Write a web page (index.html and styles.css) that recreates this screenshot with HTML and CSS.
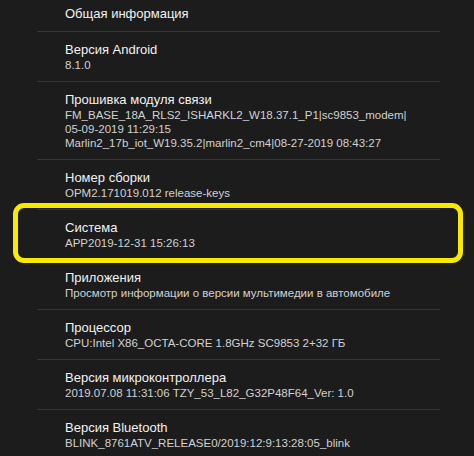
FILE: index.html
```html
<!DOCTYPE html>
<html lang="ru">
<head>
<meta charset="UTF-8" />
<meta name="viewport" content="width=device-width, initial-scale=1" />
<title>Об устройстве</title>
<link rel="stylesheet" href="styles.css">
</head>
<body>
  <ul class="info-list">
    <li class="info-item first">
      <div class="info-title">Общая информация</div>
    </li>
    <li class="info-item">
      <div class="info-title">Версия Android</div>
      <div class="info-value">8.1.0</div>
    </li>
    <li class="info-item">
      <div class="info-title">Прошивка модуля связи</div>
      <div class="info-value">FM_BASE_18A_RLS2_ISHARKL2_W18.37.1_P1|sc9853_modem|</div>
      <div class="info-value">05-09-2019 11:29:15</div>
      <div class="info-value">Marlin2_17b_iot_W19.35.2|marlin2_cm4|08-27-2019 08:43:27</div>
    </li>
    <li class="info-item">
      <div class="info-title">Номер сборки</div>
      <div class="info-value">OPM2.171019.012 release-keys</div>
    </li>
    <li class="info-item highlighted">
      <div class="info-title">Система</div>
      <div class="info-value">APP2019-12-31 15:26:13</div>
    </li>
    <li class="info-item">
      <div class="info-title">Приложения</div>
      <div class="info-value">Просмотр информации о версии мультимедии в автомобиле</div>
    </li>
    <li class="info-item">
      <div class="info-title">Процессор</div>
      <div class="info-value">CPU:Intel X86_OCTA-CORE 1.8GHz SC9853 2+32 ГБ</div>
    </li>
    <li class="info-item">
      <div class="info-title">Версия микроконтроллера</div>
      <div class="info-value">2019.07.08 11:31:06 TZY_53_L82_G32P48F64_Ver: 1.0</div>
    </li>
    <li class="info-item">
      <div class="info-title">Версия Bluetooth</div>
      <div class="info-value">BLINK_8761ATV_RELEASE0/2019:12:9:13:28:05_blink</div>
    </li>
  </ul>
</body>
</html>
```
FILE: styles.css
```css
:root {
  --bg-color: #1c1c1c;
  --title-color: #f2f2f2;
  --value-color: #d2d2d2;
  --divider-color: #363636;
  --marker-color: #f7ea00;
  --font-family: 'Liberation Sans', Arial, Helvetica, sans-serif;
}
* {
  box-sizing: border-box;
}
html, body {
  margin: 0;
  padding: 0;
  background-color: var(--bg-color);
  font-family: var(--font-family);
  overflow: hidden;
}
.info-list {
  list-style: none;
  margin: 0 34px 0 37px;
  padding: 0;
}
.info-item {
  position: relative;
  padding: 10px 0 9px 28px;
  border-bottom: 1px solid var(--divider-color);
}
.info-item.first {
  padding-top: 6px;
}
.info-item:last-child {
  border-bottom: none;
}
.info-title {
  font-size: 13px;
  line-height: 16px;
  color: var(--title-color);
  white-space: nowrap;
}
.info-value {
  font-size: 11.5px;
  line-height: 14px;
  color: var(--value-color);
  white-space: nowrap;
}
/* yellow marker drawn over the "Система" row */
.highlighted::after {
  content: '';
  position: absolute;
  top: -7px;
  bottom: -4px;
  left: -24px;
  right: -23px;
  border: 5px solid var(--marker-color);
  border-radius: 11px;
  pointer-events: none;
}
```
